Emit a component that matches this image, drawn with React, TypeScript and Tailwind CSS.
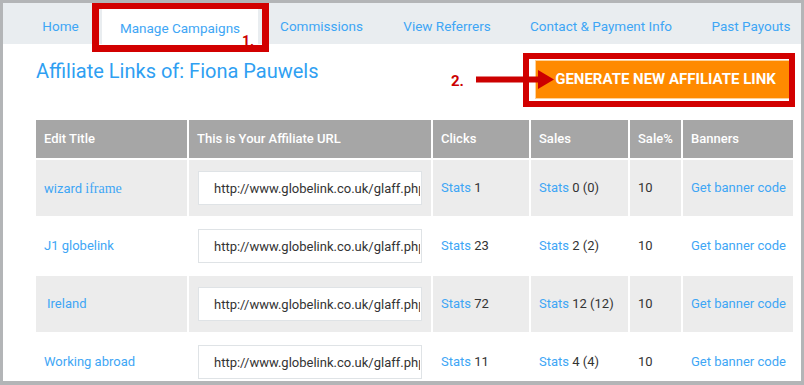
import React from 'react';

interface LinkRow {
  title: React.ReactNode;
  indent?: boolean;
  clicks: string;
  sales: string;
}

const tabs = [
  { label: 'Home', w: 'w-[75px]' },
  { label: 'Manage Campaigns', w: 'w-[156px]', active: true },
  { label: 'Commissions', w: 'w-[119px]' },
  { label: 'View Referrers', w: 'w-[124px]' },
  { label: 'Contact & Payment Info', w: 'w-[176px]' },
  { label: 'Past Payouts', w: 'w-[116px]' },
];

const rows: LinkRow[] = [
  {
    title: (
      <>
        wizard <span className="font-['Liberation_Serif',serif] text-[14px]">iframe</span>
      </>
    ),
    clicks: '1',
    sales: '0 (0)',
  },
  { title: 'J1 globelink', clicks: '23', sales: '2 (2)' },
  { title: 'Ireland', indent: true, clicks: '72', sales: '12 (12)' },
  { title: 'Working abroad', clicks: '11', sales: '4 (4)' },
];

const URL = 'http://www.globelink.co.uk/glaff.php?aff=fiona';

export default function App() {
  return (
    <div className="relative w-[804px] h-[385px] overflow-hidden bg-white border-[3px] border-b-[4px] border-[#b3b5b7] font-['Roboto',sans-serif]">
      {/* top navigation */}
      <nav className="h-[41px] bg-[#e9edf0] flex gap-1 pl-[20px]">
        {tabs.map((t) => (
          <a
            key={t.label}
            className={`${t.w} shrink-0 flex items-center justify-center pt-[5px] text-[13.5px] text-[#3ea6f5] ${
              t.active ? 'bg-white h-[45px]' : ''
            }`}
          >
            {t.label}
          </a>
        ))}
      </nav>

      <div className="pl-[33px] pr-[7px] pt-[16px]">
        <div className="flex items-start justify-between">
          <h1 className="text-[20px] leading-[22px] text-[#2f9ff2]">Affiliate Links of: Fiona Pauwels</h1>
          <button className="mr-[4px] w-[255px] h-[39px] bg-[#ff8a00] border border-[#ffd199] text-white font-bold text-[15px] pl-[6px]">
            GENERATE NEW AFFILIATE LINK
          </button>
        </div>

        <table className="mt-[19px] -ml-[2px] w-[759px] border-collapse table-fixed text-[13px]">
          <colgroup>
            <col className="w-[153px]" />
            <col className="w-[244px]" />
            <col className="w-[98px]" />
            <col className="w-[99px]" />
            <col className="w-[53px]" />
            <col className="w-[112px]" />
          </colgroup>
          <thead>
            <tr className="h-[40px] bg-[#a6a6a6] text-white text-left">
              {['Edit Title', 'This is Your Affiliate URL', 'Clicks', 'Sales', 'Sale%', 'Banners'].map((h) => (
                <th key={h} className="border-2 border-white font-medium pl-[8px] whitespace-nowrap">
                  {h}
                </th>
              ))}
            </tr>
          </thead>
          <tbody>
            {rows.map((r, i) => (
              <tr key={i} className={`h-[58px] ${i % 2 === 0 ? 'bg-[#ececec]' : 'bg-white'}`}>
                <td className={`border-2 border-white text-[#3ea6f5] ${r.indent ? 'pl-[11px]' : 'pl-[8px]'}`}>{r.title}</td>
                <td className="border-2 border-white pl-[9px]">
                  <input
                    readOnly
                    value={URL}
                    className="w-[224px] h-[34px] bg-white border border-[#dfe3e6] pl-[15px] pr-[1px] text-[13px] text-[#333] outline-none"
                  />
                </td>
                <td className="border-2 border-white pl-[8px] text-[#333]">
                  <span className="text-[#3ea6f5]">Stats</span> {r.clicks}
                </td>
                <td className="border-2 border-white pl-[8px] text-[#333]">
                  <span className="text-[#3ea6f5]">Stats</span> {r.sales}
                </td>
                <td className="border-2 border-white pl-[8px] text-[#333]">10</td>
                <td className="border-2 border-white pl-[8px] text-[#3ea6f5] whitespace-nowrap">Get banner code</td>
              </tr>
            ))}
          </tbody>
        </table>
      </div>

      {/* annotations */}
      <div className="absolute left-[89px] top-[-1px] w-[177px] h-[50px] border-[7px] border-[#d20000]" />
      <span className="absolute left-[239px] top-[28px] text-[14px] font-bold text-[#cc0000]">1.</span>
      <div className="absolute left-[520px] top-[50px] w-[272px] h-[54px] border-[6px] border-[#d20000]" />
      <span className="absolute left-[448px] top-[67px] text-[15px] font-bold text-[#cc0000]">2.</span>
      <svg className="absolute left-[473px] top-[67px]" width="80" height="20" viewBox="0 0 80 20">
        <rect x="0" y="6.5" width="64" height="6" fill="#cc0000" />
        <polygon points="62,0 78,9.5 62,19" fill="#cc0000" />
      </svg>
    </div>
  );
}
